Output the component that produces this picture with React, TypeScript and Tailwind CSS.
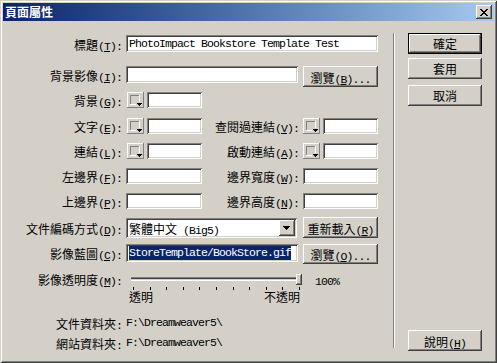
import React from 'react';

const zh = "font-['Noto_Sans_CJK_TC',sans-serif] text-[12px] leading-[14px]";
const en = "font-['Liberation_Mono',monospace] text-[11.5px] leading-[14px] tracking-[-0.9px]";
const sunken =
  'bg-white shadow-[inset_1px_1px_0_#808080,inset_-1px_-1px_0_#ffffff,inset_2px_2px_0_#404040,inset_-2px_-2px_0_#d4d0c8]';
const raised =
  'bg-[#d4d0c8] shadow-[inset_-1px_-1px_0_#404040,inset_1px_1px_0_#ffffff,inset_-2px_-2px_0_#808080,inset_2px_2px_0_#d4d0c8]';

// chinese text + (accelerator) + tail, latin part in the narrow mono face
function Acc({ t, k, tail = '' }: { t: string; k?: string; tail?: string }) {
  return (
    <span className="whitespace-nowrap">
      <span className={zh}>{t}</span>
      {k ? (
        <span className={en}>
          (<span className="underline">{k}</span>){tail}
        </span>
      ) : (
        tail && <span className={en}>{tail}</span>
      )}
    </span>
  );
}

function Label({ t, k, w = 'w-[123px]', h = 'h-[16px]' }: { t: string; k?: string; w?: string; h?: string }) {
  return (
    <div className={`${w} ${h} pr-[4px] shrink-0 flex items-center justify-end`}>
      <Acc t={t} k={k} tail=":" />
    </div>
  );
}

function Field({ w, h = 'h-[16px]', children }: { w: string; h?: string; children?: React.ReactNode }) {
  return <div className={`${sunken} ${w} ${h} shrink-0 flex items-center pl-[3px] overflow-hidden whitespace-nowrap`}>{children}</div>;
}

function Btn({ w = 'w-[75px]', h = 'h-[21px]', children }: { w?: string; h?: string; children: React.ReactNode }) {
  return <div className={`${raised} ${w} ${h} shrink-0 flex items-center justify-center`}>{children}</div>;
}

function Swatch() {
  return (
    <svg width="17" height="16" viewBox="0 0 17 16" shapeRendering="crispEdges" className="shrink-0">
      <rect width="17" height="16" fill="#d4d0c8" />
      <path d="M0 0h16v1H1v14H0z" fill="#ffffff" />
      <path d="M16 0h1v16H0v-1h16z" fill="#808080" />
      <path d="M3 3h9v1H4v8H3z" fill="#808080" />
      <path d="M12 3h1v10H3v-1h9z" fill="#ffffff" />
      <rect x="9" y="10" width="6" height="4" fill="#d4d0c8" />
      <path d="M10 11h5v1h-1v1h-1v1h-1v-1h-1v-1h-1z" fill="#000000" />
    </svg>
  );
}

export default function App() {
  const ticks = Array.from({ length: 11 }, (_, i) => i);

  return (
    <div className="w-[497px] h-[363px] bg-[#d4d0c8] p-[3px] flex flex-col text-black shadow-[inset_1px_1px_0_#d4d0c8,inset_-1px_-1px_0_#404040,inset_2px_2px_0_#ffffff,inset_-2px_-2px_0_#808080]">
      {/* title bar */}
      <div className="h-[18px] flex items-center bg-linear-to-r from-[#0a246a] to-[#a6caf0]">
        <span className={`${zh} font-bold text-white ml-[2px]`}>頁面屬性</span>
        <div className={`${raised} ml-auto mr-[2px] w-[16px] h-[14px] flex items-center justify-center`}>
          <svg width="8" height="7" viewBox="0 0 8 7" shapeRendering="crispEdges">
            <path
              d="M0 0h2v1H0zM6 0h2v1H6zM1 1h2v1H1zM5 1h2v1H5zM2 2h4v1H2zM3 3h2v1H3zM2 4h4v1H2zM1 5h2v1H1zM5 5h2v1H5zM0 6h2v1H0zM6 6h2v1H6z"
              fill="#000000"
            />
          </svg>
        </div>
      </div>

      <div className="flex flex-1">
        {/* form */}
        <div className="w-[390px] flex flex-col">
          <div className="flex items-center mt-[14px]">
            <Label t="標題" k="T" h="h-[17px]" />
            <Field w="w-[252px]" h="h-[17px]">
              <span className={en}>PhotoImpact Bookstore Template Test</span>
            </Field>
          </div>

          <div className="flex items-start mt-[14px]">
            <Label t="背景影像" k="I" h="h-[17px]" />
            <Field w="w-[172px]" h="h-[17px]" />
            <div className="ml-[5px]">
              <Btn>
                <Acc t="瀏覽" k="B" tail="..." />
              </Btn>
            </div>
          </div>

          <div className="flex items-center mt-[5px]">
            <Label t="背景" k="G" />
            <div className="ml-[1px]">
              <Swatch />
            </div>
            <div className="ml-[3px]">
              <Field w="w-[55px]" />
            </div>
          </div>

          <div className="flex items-center mt-[10px]">
            <Label t="文字" k="E" />
            <div className="ml-[1px]">
              <Swatch />
            </div>
            <div className="ml-[3px]">
              <Field w="w-[55px]" />
            </div>
            <Label t="查閱過連結" k="V" w="w-[101px]" />
            <Swatch />
            <div className="ml-[3px]">
              <Field w="w-[55px]" />
            </div>
          </div>

          <div className="flex items-center mt-[9px]">
            <Label t="連結" k="L" />
            <div className="ml-[1px]">
              <Swatch />
            </div>
            <div className="ml-[3px]">
              <Field w="w-[55px]" />
            </div>
            <Label t="啟動連結" k="A" w="w-[101px]" />
            <Swatch />
            <div className="ml-[3px]">
              <Field w="w-[55px]" />
            </div>
          </div>

          <div className="flex items-center mt-[9px]">
            <Label t="左邊界" k="F" />
            <Field w="w-[76px]" />
            <Label t="邊界寬度" k="W" w="w-[101px]" />
            <Field w="w-[75px]" />
          </div>

          <div className="flex items-center mt-[9px]">
            <Label t="上邊界" k="P" />
            <Field w="w-[76px]" />
            <Label t="邊界高度" k="N" w="w-[101px]" />
            <Field w="w-[75px]" />
          </div>

          <div className="flex items-center mt-[8px] h-[21px]">
            <Label t="文件編碼方式" k="D" h="h-[20px]" />
            <div className={`${sunken} w-[171px] h-[20px] flex items-center pl-[3px] pr-[2px]`}>
              <span className="flex-1 whitespace-nowrap">
                <span className={zh}>繁體中文</span>
                <span className={en}> (Big5)</span>
              </span>
              <div className={`${raised} w-[16px] h-[16px]`}>
                <svg width="16" height="16" viewBox="0 0 16 16" shapeRendering="crispEdges">
                  <path d="M4 6h7v1h-1v1h-1v1h-1v1h-1v-1h-1v-1h-1v-1h-1z" fill="#000000" />
                </svg>
              </div>
            </div>
            <div className="ml-[6px]">
              <Btn>
                <Acc t="重新載入" k="R" />
              </Btn>
            </div>
          </div>

          <div className="flex items-start mt-[6px]">
            <Label t="影像藍圖" k="C" h="h-[18px]" />
            <Field w="w-[172px]" h="h-[18px]">
              <span className={`${en} bg-[#0a246a] text-white`}>StoreTemplate/BookStore.gif</span>
            </Field>
            <div className="ml-[5px]">
              <Btn h="h-[20px]">
                <Acc t="瀏覽" k="O" tail="..." />
              </Btn>
            </div>
          </div>

          {/* opacity slider */}
          <div className="flex items-start mt-[10px]">
            <Label t="影像透明度" k="M" h="h-[9px]" />
            <div className="w-[176px] flex flex-col">
              <div className="relative ml-[5px] w-[171px] h-[11px]">
                <div className="mt-[3px] h-[4px] bg-[#d4d0c8] shadow-[inset_0_1px_0_#808080,inset_0_-1px_0_#ffffff,inset_0_2px_0_#404040]" />
                <svg
                  width="6"
                  height="11"
                  viewBox="0 0 6 11"
                  shapeRendering="crispEdges"
                  className="absolute right-0 top-0"
                >
                  <rect width="6" height="11" fill="#d4d0c8" />
                  <path d="M0 0h5v1H1v9H0z" fill="#ffffff" />
                  <path d="M5 0h1v11H0v-1h5z" fill="#404040" />
                  <path d="M4 1h1v9H1V9h3z" fill="#808080" />
                </svg>
              </div>
              <div className="mt-[2px] ml-[7px] w-[167px] flex justify-between">
                {ticks.map((i) => (
                  <div key={i} className="w-[1px] h-[3px] bg-black" />
                ))}
              </div>
              <div className="ml-[3px] w-[171px] flex justify-between">
                <span className={zh}>透明</span>
                <span className={zh}>不透明</span>
              </div>
            </div>
            <span className={`${en} ml-[13px] mt-[1px]`}>100%</span>
          </div>

          <div className="flex items-center mt-[12px]">
            <Label t="文件資料夾" h="h-[14px]" />
            <span className={en}>F:\Dreamweaver5\</span>
          </div>
          <div className="flex items-center mt-[6px]">
            <Label t="網站資料夾" h="h-[14px]" />
            <span className={en}>F:\Dreamweaver5\</span>
          </div>
        </div>

        {/* etched divider */}
        <div className="mt-[12px] h-[315px] w-[2px] border-l border-l-[#808080] border-r border-r-white" />

        {/* buttons */}
        <div className="flex flex-col flex-1 pl-[13px]">
          <div className={`mt-[12px] w-[74px] h-[21px] border border-black flex items-center justify-center ${raised}`}>
            <span className={zh}>確定</span>
          </div>
          <div className="mt-[4px]">
            <Btn w="w-[74px]">
              <span className={zh}>套用</span>
            </Btn>
          </div>
          <div className="mt-[6px]">
            <Btn w="w-[74px]">
              <span className={zh}>取消</span>
            </Btn>
          </div>
          <div className="mt-auto mb-[9px]">
            <Btn w="w-[74px]">
              <Acc t="說明" k="H" />
            </Btn>
          </div>
        </div>
      </div>
    </div>
  );
}
